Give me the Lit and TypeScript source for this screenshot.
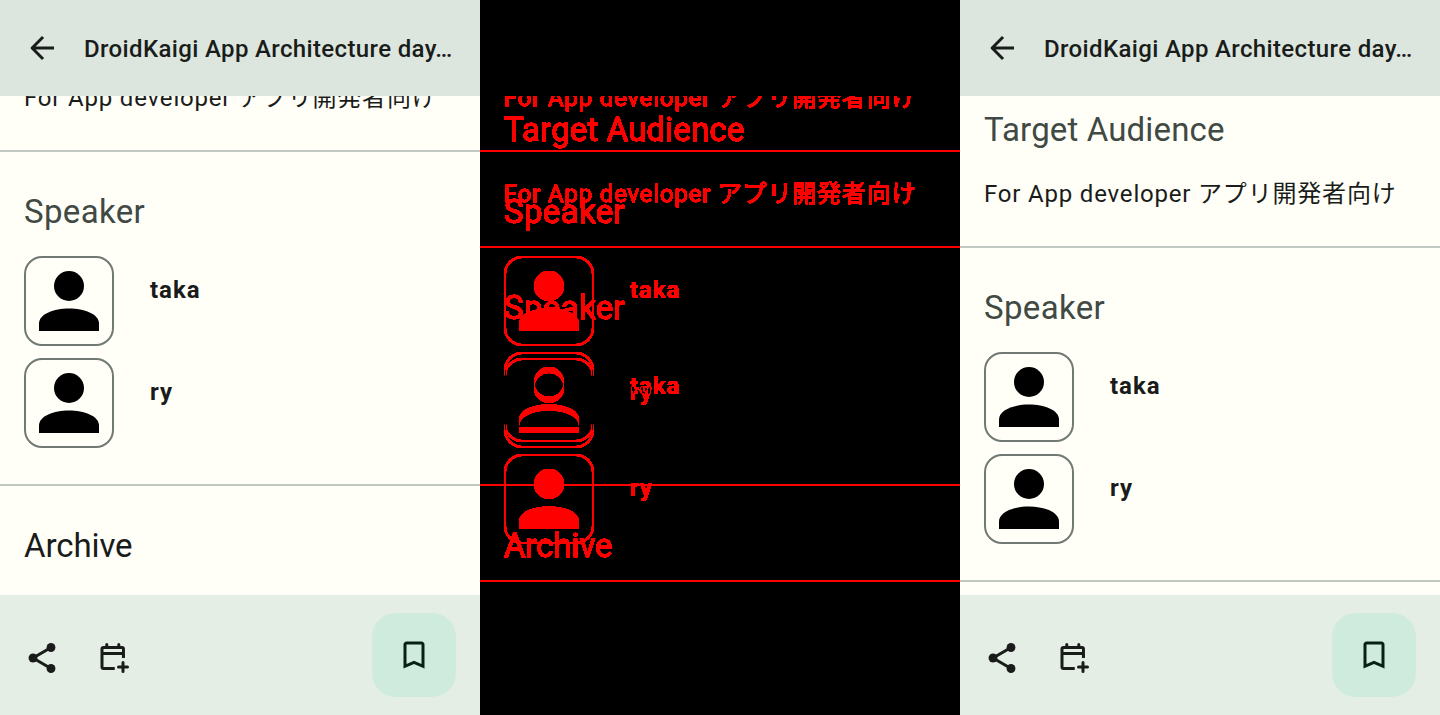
import { LitElement, html, css, svg, nothing } from "lit";
import { customElement, property } from "lit/decorators.js";

const tokens = css`
  :host {
    display: block;
    box-sizing: border-box;
    font-family: Roboto, "Noto Sans CJK JP", sans-serif;
    color: var(--ink);
  }
  svg {
    display: block;
    fill: currentColor;
  }
`;

const icon = (body: unknown) =>
  html`<svg width="36" height="36" viewBox="0 0 24 24" aria-hidden="true">${body}</svg>`;

const backIcon = icon(svg`
  <path fill="none" stroke="currentColor" stroke-width="2" stroke-linejoin="round" d="M20 12H5.4M12.7 4.700 5.400 12l7.300 7.300"/>`);

const shareIcon = icon(svg`
  <circle cx="18" cy="5" r="2.950"/><circle cx="6" cy="12" r="2.950"/><circle cx="18" cy="19" r="2.950"/>
  <path fill="none" stroke="currentColor" stroke-width="2" d="M18 5 6 12l12 7"/>`);

const calendarIcon = icon(svg`
  <path fill="none" stroke="currentColor" stroke-width="2" d="M12.500 19H5q-1 0-1-1V6q0-1 1-1h12.300q1 0 1 1v6M4 9h14"/>
  <path fill="none" stroke="currentColor" stroke-width="2" stroke-linecap="round" d="M7.200 3v2M15.200 3v2M18 15v6M15 18h6"/>`);

const bookmarkIcon = icon(svg`
  <path d="M17 3H7c-1.100 0-1.990.9-1.990 2L5 21l7-3 7 3V5c0-1.100-.9-2-2-2zm0 15-5-2.180L7 18V5h10v13z"/>`);

const personIcon = html`<svg width="60" height="60" viewBox="0 0 60 60" aria-hidden="true">
  <circle cx="30" cy="15" r="15"/>
  <path d="M0 60V52.500C0 43 15 37.500 30 37.500S60 43 60 52.500V60Z"/>
</svg>`;

const SPEAKERS = ["taka", "ry"];

@customElement("session-content")
class SessionContent extends LitElement {
  @property({ type: Boolean, reflect: true }) scrolled = false;

  static styles = [
    tokens,
    css`
      :host {
        overflow: hidden;
        height: 499px;
        padding-top: 13px;
      }
      :host([scrolled]) {
        padding-top: 0;
      }
      section {
        display: flex;
        flex-direction: column;
      }
      .audience {
        padding: 0 24px 34px;
        gap: 25px;
        border-bottom: 2px solid var(--line);
      }
      :host([scrolled]) .audience {
        margin-top: -16px;
      }
      .speakers {
        padding: 39px 24px 36px;
        gap: 23px;
        border-bottom: 2px solid var(--line);
      }
      .archive {
        padding: 39px 24px 0;
      }
      h2 {
        margin: 0;
        font-weight: 400;
        font-size: 33px;
        line-height: 42px;
        letter-spacing: 0.15px;
        color: var(--heading);
      }
      .speakers h2 {
        letter-spacing: 0.35px;
      }
      .archive h2 {
        letter-spacing: -0.1px;
        color: var(--ink);
      }
      p {
        margin: 0;
        font-size: 24px;
        line-height: 36px;
        letter-spacing: 0.81px;
        white-space: nowrap;
      }
      h2,
      p {
        -webkit-text-stroke: var(--text-stroke, 0);
      }
      .list {
        display: flex;
        flex-direction: column;
        gap: 12px;
      }
      .row {
        display: flex;
        gap: 36px;
        mix-blend-mode: var(--first-row-blend, normal);
      }
      .row + .row {
        mix-blend-mode: normal;
      }
      .avatar {
        box-sizing: border-box;
        width: 90px;
        height: 90px;
        padding: 13px;
        border: 2px solid var(--outline);
        border-radius: 18px;
        color: var(--figure);
      }
      .name {
        padding-top: 16px;
        font-weight: 700;
        font-size: 24px;
        line-height: 36px;
        letter-spacing: 1px;
      }
    `,
  ];

  render() {
    return html`
      <section class="audience">
        ${this.scrolled ? nothing : html`<h2>Target Audience</h2>`}
        <p>For App developer アプリ開発者向け</p>
      </section>
      <section class="speakers">
        <h2>Speaker</h2>
        <div class="list">
          ${SPEAKERS.map(
            (name) => html`<div class="row">
              <div class="avatar">${personIcon}</div>
              <div class="name">${name}</div>
            </div>`
          )}
        </div>
      </section>
      ${this.scrolled ? html`<section class="archive"><h2>Archive</h2></section>` : nothing}
    `;
  }
}

@customElement("session-screen")
class SessionScreen extends LitElement {
  @property({ type: Boolean }) scrolled = false;

  static styles = [
    tokens,
    css`
      :host {
        --ink: #191c1a;
        --heading: #404943;
        --line: #bfc9c2;
        --outline: #707973;
        --figure: #000;
        display: grid;
        grid-template-rows: 96px 499px 120px;
        background: #fffff8;
      }
      header {
        display: flex;
        align-items: center;
        gap: 24px;
        padding: 0 24px;
        background: #dde6de;
      }
      h1 {
        margin: 0;
        padding-top: 2px;
        font-weight: 500;
        font-size: 24px;
        line-height: 36px;
        letter-spacing: 0.36px;
        white-space: nowrap;
      }
      footer {
        display: flex;
        align-items: center;
        gap: 36px;
        padding: 0 24px;
        background: #e5eee5;
      }
      .action {
        padding-top: 6px;
      }
      .fab {
        display: grid;
        place-items: center;
        width: 84px;
        height: 84px;
        margin-left: auto;
        border-radius: 24px;
        background: #cfebdd;
        color: #092017;
      }
    `,
  ];

  render() {
    return html`
      <header>${backIcon}<h1>DroidKaigi App Architecture day…</h1></header>
      <session-content ?scrolled=${this.scrolled}></session-content>
      <footer>
        <div class="action">${shareIcon}</div>
        <div class="action">${calendarIcon}</div>
        <div class="fab">${bookmarkIcon}</div>
      </footer>
    `;
  }
}

@customElement("screen-diff")
class ScreenDiff extends LitElement {
  static styles = [
    tokens,
    css`
      :host {
        --ink: #f00;
        --heading: #f00;
        --line: #f00;
        --outline: #f00;
        --figure: #f00;
        --text-stroke: 0.4px #f00;
        display: grid;
        grid-template-rows: 96px 499px 120px;
        background: #000;
        filter: brightness(14);
      }
      session-content {
        grid-area: 2 / 1;
      }
      .after {
        --first-row-blend: difference;
      }
    `,
  ];

  render() {
    return html`
      <session-content scrolled></session-content>
      <session-content class="after"></session-content>
    `;
  }
}

@customElement("app-root")
class AppRoot extends LitElement {
  static styles = css`
    :host {
      display: grid;
      grid-template-columns: repeat(3, 480px);
      width: 1440px;
      height: 715px;
      overflow: hidden;
    }
  `;

  render() {
    return html`
      <session-screen scrolled></session-screen>
      <screen-diff></screen-diff>
      <session-screen></session-screen>
    `;
  }
}
